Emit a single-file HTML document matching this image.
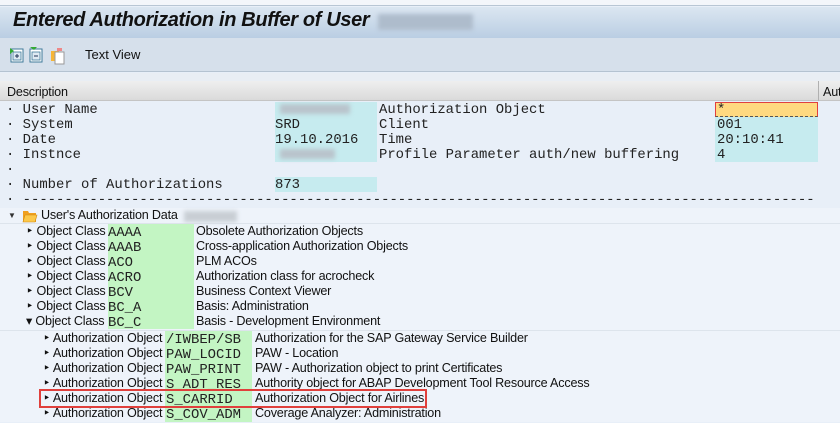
<!DOCTYPE html>
<html><head><meta charset="utf-8"><style>
*{margin:0;padding:0;box-sizing:border-box}
body{width:840px;height:422px;overflow:hidden;background:#e8eff8;font-family:"Liberation Sans",sans-serif;position:relative}
.a{position:absolute;white-space:pre}
.m{font-family:"Liberation Mono",monospace;font-size:13.9px;color:#222;line-height:15px;padding-top:1px}
.s{font-size:12.6px;color:#111;line-height:15px;letter-spacing:-0.2px}
.cy{background:#c6ebef}
.gr{background:#c3f5c3}
.tri{font-size:8px;color:#333}
.blur{background:#b9c4cc;filter:blur(2px)}
</style></head><body>
<div class="a" style="left:0;top:0;width:840px;height:6px;background:#f3f6fa;border-bottom:1px solid #b8c6d4"></div>
<div class="a" style="left:0;top:7px;width:840px;height:31px;background:linear-gradient(#dbe6f1,#bacee3)"></div>
<div class="a" style="left:13px;top:9px;font-size:20px;font-weight:bold;font-style:italic;color:#111;letter-spacing:-0.35px">Entered Authorization in Buffer of User</div>
<div class="a blur" style="left:378px;top:14px;width:95px;height:16px;background:#aebccc"></div>
<div class="a" style="left:0;top:38px;width:840px;height:34px;background:#d6e0eb;border-bottom:1px solid #b5c3d1"></div>
<svg class="a" style="left:10px;top:47px" width="60" height="18">
<rect x="1" y="2" width="12" height="13" fill="#fff" stroke="#3f7a9a"/><rect x="3" y="5" width="8" height="8" fill="#dfeaf2" stroke="#3f7a9a" stroke-width=".8"/><path d="M5 9h4M7 7v4" stroke="#235" /><path d="M0 1l4 3-4 3z" fill="#3a3"/>
<rect x="20" y="2" width="12" height="13" fill="#fff" stroke="#3f7a9a"/><rect x="22" y="5" width="8" height="8" fill="#dfeaf2" stroke="#3f7a9a" stroke-width=".8"/><path d="M24 9h4" stroke="#235"/><path d="M20 0h7l-3 3z" fill="#3a3"/>
<rect x="41" y="4" width="8" height="10" fill="#f6b537"/><rect x="45" y="5" width="9" height="12" fill="#fff" stroke="#999"/><path d="M47 1h5v3h-5z" fill="#e88"/>
</svg>
<div class="a" style="left:85px;top:47px;font-size:13px;color:#111">Text View</div>
<div class="a" style="left:0;top:73px;width:840px;height:8px;background:#e9eef4"></div>
<div class="a" style="left:0;top:81px;width:840px;height:20px;background:linear-gradient(#efefef,#dadada);border-bottom:1px solid #c4c4c4"></div>
<div class="a" style="left:818px;top:81px;width:1px;height:20px;background:#b0b0b0"></div>
<div class="a s" style="left:7px;top:85px">Description</div>
<div class="a s" style="left:823px;top:85px">Aut</div>

<div class="a cy" style="left:275px;top:102px;width:102px;height:60px"></div>
<div class="a cy" style="left:275px;top:177px;width:102px;height:15px"></div>
<div class="a cy" style="left:715px;top:117px;width:103px;height:45px"></div>
<div class="a" style="left:715px;top:102px;width:103px;height:15px;background:#ffd980;border:1px solid #e04040;border-bottom:1px dashed #555"></div>
<div class="a blur" style="left:280px;top:104px;width:70px;height:10px"></div>
<div class="a blur" style="left:280px;top:149px;width:55px;height:10px"></div>

<div class="a m" style="left:6px;top:102px">· User Name
· System
· Date
· Instnce
·
· Number of Authorizations
· -----------------------------------------------------------------------------------------------</div>
<div class="a m" style="left:275px;top:102px">
SRD
19.10.2016


873</div>
<div class="a m" style="left:379px;top:102px">Authorization Object
Client
Time
Profile Parameter auth/new buffering</div>
<div class="a m" style="left:717px;top:102px">*
001
20:10:41
4</div>

<div class="a" style="left:0;top:208px;width:840px;height:214px;background:#eef3fa"></div>
<div class="a" style="left:0;top:223px;width:840px;height:1px;background:#dde4ec"></div>
<div class="a" style="left:0;top:330px;width:840px;height:1px;background:#dde4ec"></div>
<div class="a tri" style="left:8px;top:211px">▼</div>
<svg class="a" style="left:22px;top:209px" width="16" height="14"><path d="M1 2h5l1 2h7v9H1z" fill="#f0a020"/><path d="M3 6h12l-2 7H1z" fill="#fcc84a" stroke="#d08a10" stroke-width=".6"/></svg>
<div class="a s" style="left:41px;top:208px">User's Authorization Data</div>
<div class="a blur" style="left:184px;top:211px;width:53px;height:11px;background:#c8ced4"></div>

<div class="a gr" style="left:108px;top:224px;width:86px;height:105px"></div>
<div class="a gr" style="left:165px;top:331px;width:87px;height:91px"></div>
<div class="a s" style="left:26px;top:224px">‣ Object Class
‣ Object Class
‣ Object Class
‣ Object Class
‣ Object Class
‣ Object Class
▾ Object Class</div>
<div class="a m" style="left:108px;top:225px">AAAA
AAAB
ACO
ACRO
BCV
BC_A
BC_C</div>
<div class="a s" style="left:196px;top:224px">Obsolete Authorization Objects
Cross-application Authorization Objects
PLM ACOs
Authorization class for acrocheck
Business Context Viewer
Basis: Administration
Basis - Development Environment</div>
<div class="a s" style="left:43px;top:331px">‣ Authorization Object
‣ Authorization Object
‣ Authorization Object
‣ Authorization Object
‣ Authorization Object
‣ Authorization Object</div>
<div class="a m" style="left:166px;top:332px">/IWBEP/SB
PAW_LOCID
PAW_PRINT
S_ADT_RES
S_CARRID
S_COV_ADM</div>
<div class="a s" style="left:255px;top:331px">Authorization for the SAP Gateway Service Builder
PAW - Location
PAW - Authorization object to print Certificates
Authority object for ABAP Development Tool Resource Access
Authorization Object for Airlines
Coverage Analyzer: Administration</div>
<div class="a" style="left:39px;top:389px;width:388px;height:19px;border:2px solid #e0403c"></div>
</body></html>
